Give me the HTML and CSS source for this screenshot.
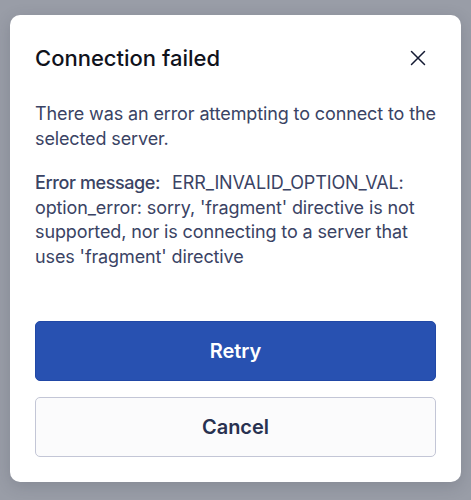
FILE: index.html
```html
<!DOCTYPE html>
<html>
<head>
<meta charset="utf-8">
<link rel="stylesheet" href="styles.css">
</head>
<body>
<div class="modal">
  <div class="header">
    <h1 class="title">Connection failed</h1>
    <button class="close" aria-label="Close">
      <svg width="16" height="16" viewBox="0 0 16 16"><path d="M1.5 1.5 L14.5 14.5 M14.5 1.5 L1.5 14.5" stroke="#141a33" stroke-width="1.5" stroke-linecap="round" fill="none"/></svg>
    </button>
  </div>
  <p class="text first">There was an error attempting to connect to the selected server.</p>
  <p class="text second"><span class="label">Error message:</span><span class="msg">ERR_INVALID_OPTION_VAL: option_error: sorry, 'fragment' directive is not supported, nor is connecting to a server that uses 'fragment' directive</span></p>
  <div class="actions">
    <button class="btn primary">Retry</button>
    <button class="btn secondary">Cancel</button>
  </div>
</div>
</body>
</html>
```
FILE: styles.css
```css
html, body {
  margin: 0;
  padding: 0;
}
body {
  background: #999da7;
  width: 471px;
  height: 500px;
  font-family: Inter, "Noto Sans", sans-serif;
  padding: 15px 10px 0;
  box-sizing: border-box;
}
.modal {
  background: #fff;
  border-radius: 10px;
  padding: 29px 25px 25px;
  box-shadow: 0 4px 16px rgba(40, 44, 60, 0.18);
}
.header {
  display: flex;
  align-items: center;
  justify-content: space-between;
}
.title {
  margin: 0;
  font-size: 22px;
  line-height: 28px;
  font-weight: 500;
  color: #10121c;
}
.close {
  border: 0;
  background: none;
  padding: 0;
  width: 16px;
  height: 16px;
  margin-right: 10px;
  display: flex;
}
.text {
  margin: 0;
  font-size: 18px;
  line-height: 24.5px;
  letter-spacing: -0.12px;
  color: #3a4364;
}
.first {
  margin-top: 30px;
}
.second {
  margin-top: 20px;
}
.label {
  display: inline-block;
  font-weight: 500;
  letter-spacing: -0.4px;
  margin-right: 12px;
}
.actions {
  margin-top: 52px;
  display: flex;
  flex-direction: column;
  gap: 16px;
}
.btn {
  height: 60px;
  border-radius: 5px;
  font-family: Inter, "Noto Sans", sans-serif;
  font-size: 20px;
  font-weight: 600;
  cursor: pointer;
}
.primary {
  background: #2851b1;
  border: 1px solid #2148a6;
  color: #fff;
}
.secondary {
  background: #fbfbfc;
  border: 1px solid #c3c6d6;
  color: #283150;
}
```
